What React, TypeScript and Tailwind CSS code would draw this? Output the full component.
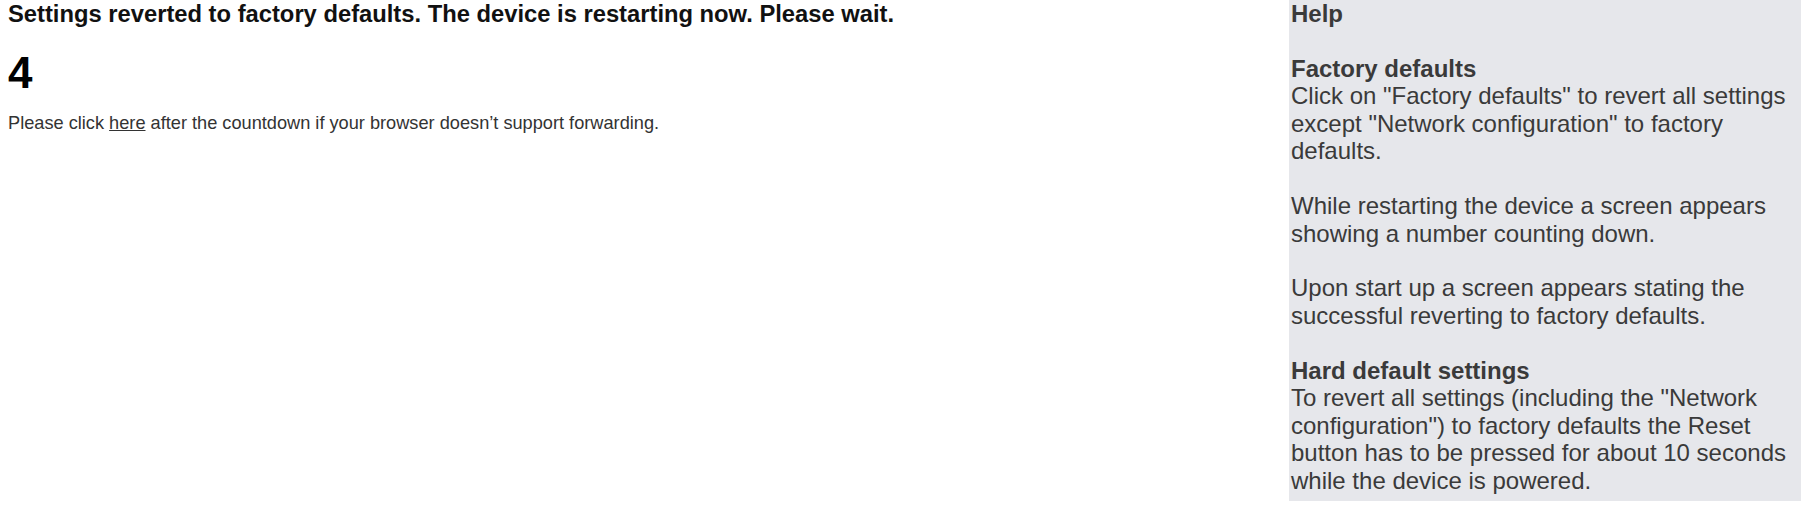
export default function App() {
  return (
    <div className="flex w-[1807px] h-[508px] bg-white font-['Liberation_Sans',Arial,sans-serif] overflow-hidden">
      {/* countdown message */}
      <div className="flex-1 pl-[8px]">
        <h1 className="text-[23.75px] leading-[28px] font-bold text-[#111]">
          Settings reverted to factory defaults. The device is restarting now. Please wait.
        </h1>
        <div className="mt-[19px] text-[44px] leading-[51px] font-bold text-black">4</div>
        <p className="mt-[15px] text-[18.2px] leading-[21px] text-[#333]">
          Please click{" "}
          <a href="#" className="underline text-[#333]">
            here
          </a>{" "}
          after the countdown if your browser doesn’t support forwarding.
        </p>
      </div>

      {/* help sidebar */}
      <aside className="w-[512px] h-[501px] mr-[6px] bg-[#e6e7eb] pl-[2px] pr-[8px] text-[24px] leading-[27.45px] text-[#3a3a3a]">
        <h2 className="font-bold">Help</h2>
        <h3 className="mt-[27.45px] font-bold">Factory defaults</h3>
        <p>
          Click on "Factory defaults" to revert all settings except "Network configuration" to factory
          defaults.
        </p>
        <p className="mt-[27.45px]">
          While restarting the device a screen appears showing a number counting down.
        </p>
        <p className="mt-[27.45px]">
          Upon start up a screen appears stating the successful reverting to factory defaults.
        </p>
        <h3 className="mt-[27.45px] font-bold">Hard default settings</h3>
        <p>
          To revert all settings (including the "Network configuration") to factory defaults the Reset
          button has to be pressed for about 10 seconds while the device is powered.
        </p>
      </aside>
    </div>
  )
}
